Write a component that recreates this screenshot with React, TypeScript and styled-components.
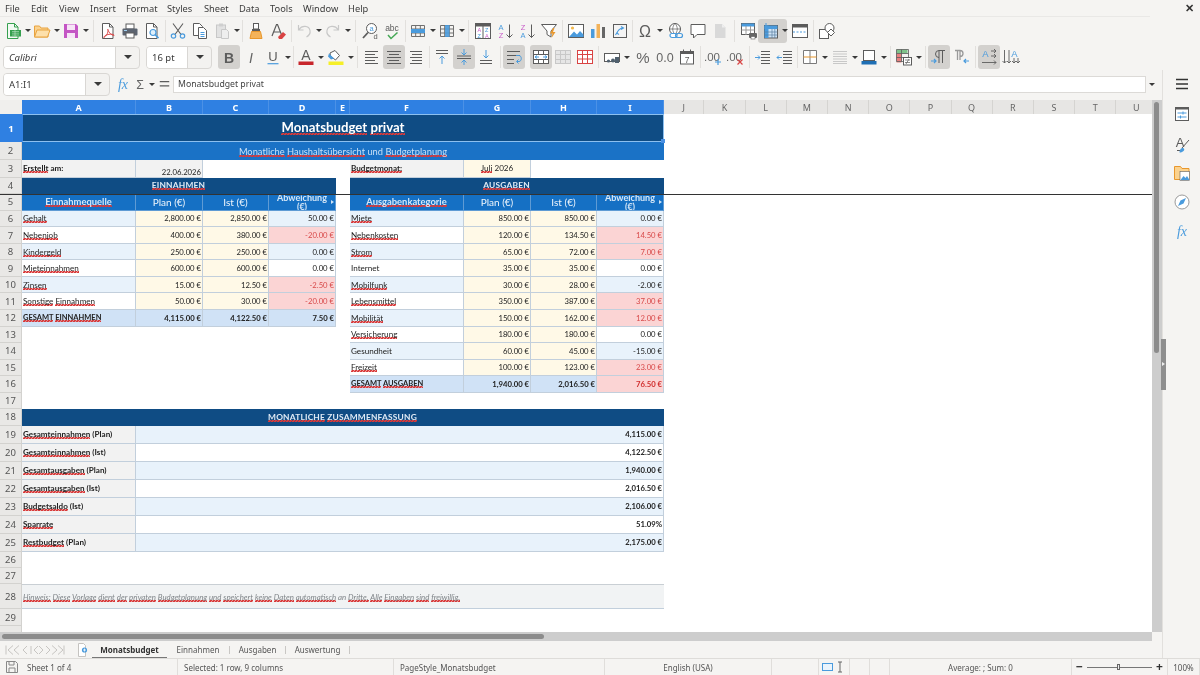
import React from 'react';
import styled, { createGlobalStyle, css } from 'styled-components';

const GlobalStyle = createGlobalStyle`
  html, body { margin: 0; padding: 0; background: #f5f4f2; }
  #root { width: 1200px; height: 675px; overflow: hidden; }
`;

const UI = `"Noto Sans", "Open Sans", sans-serif`;
const CELL = `Lato, "Open Sans", sans-serif`;
const DK = '#5c5c5c', BL = '#4a9bdd', GR = '#9a9a9a', LG = '#c8c8c8', OR = '#e8972c', RD = '#d94343';

const L = ({ ys, x1 = 3, x2 = 15, c = DK }: { ys: number[]; x1?: number; x2?: number; c?: string }) => (
  <path d={ys.map((y) => `M${x1} ${y}H${x2}`).join('')} stroke={c} strokeWidth="1" fill="none" />
);
const Grid = ({ c = '#707070', x = 2, y = 3, w = 14, h = 12 }: { c?: string; x?: number; y?: number; w?: number; h?: number }) => (
  <path
    d={`M${x + 0.5} ${y + 0.5}h${w - 1}v${h - 1}h-${w - 1}zM${x + 0.5} ${y + h / 3}h${w - 1}M${x + 0.5} ${y + (2 * h) / 3}h${w - 1}M${x + w / 3} ${y + 0.5}v${h - 1}M${x + (2 * w) / 3} ${y + 0.5}v${h - 1}`}
    stroke={c}
    fill="none"
  />
);
const Tx = ({ x, y, s, c = DK, t, b, i }: { x: number; y: number; s: number; c?: string; t: string; b?: boolean; i?: boolean }) => (
  <text x={x} y={y} fontSize={s} fill={c} fontFamily="Liberation Sans, sans-serif" fontWeight={b ? 700 : 400} fontStyle={i ? 'italic' : 'normal'} textAnchor="middle">{t}</text>
);

const icons: Record<string, React.ReactNode> = {
  new: <><path d="M3.500 1.500h7l3.500 3.500v11.500H3.500z" fill="#f2faf3" stroke="#36a04f" /><path d="M10.500 1.500v3.500H14" fill="none" stroke="#36a04f" /><rect x="6" y="8" width="11" height="6.500" fill="#36a04f" /><path d="M8 9.500h7M8 11.200h7M8 13h7M11 8v6.500" stroke="#bfe5c7" strokeWidth=".6" /></>,
  open: <><path d="M1.500 4h5l1.500 2h7v9h-13.500z" fill="#fbd28e" stroke="#e8a33f" /><path d="M1.500 15l2.500-7h13l-2.500 7z" fill="#fde0ab" stroke="#e8a33f" /></>,
  save: <><path d="M2 2h12l2 2v12H2z" fill="#c455c4" /><rect x="5" y="2.500" width="8" height="5.500" fill="#f6e4f6" /><rect x="5" y="11" width="8" height="5" fill="#f6e4f6" /></>,
  pdf: <><path d="M3.500 1.500h7l3.500 3.500v11.500H3.500z" fill="#fff" stroke={DK} /><path d="M10.500 1.500v3.500H14" fill="none" stroke={DK} /><path d="M9 9c0 3-3 6-4 6.500s.5-2.500 4-3 5-.5 6 .5-3 .5-5-3-1-3.500-1-1.500z" fill="none" stroke={RD} strokeWidth=".9" /></>,
  print: <><rect x="5" y="2" width="8" height="5" fill="#fff" stroke={DK} /><rect x="1.500" y="6.500" width="15" height="7" rx="1" fill="#5c6470" /><rect x="5" y="11" width="8" height="5" fill="#fff" stroke={DK} /><path d="M3 8.500h3" stroke="#9fd0f0" /></>,
  preview: <><path d="M3.500 1.500h7l3.500 3.500v11.500H3.500z" fill="#fff" stroke={DK} /><path d="M10.500 1.500v3.500H14" fill="none" stroke={DK} /><circle cx="10" cy="10.500" r="3" fill="#dff0fb" stroke={BL} strokeWidth="1.200" /><path d="M12.200 12.800l3.300 3.300" stroke={BL} strokeWidth="1.600" /></>,
  cut: <><path d="M4 1.500l8 11M14 1.500l-8 11" stroke={DK} fill="none" strokeWidth="1.100" /><circle cx="4.500" cy="14" r="2.200" fill="none" stroke={BL} strokeWidth="1.200" /><circle cx="13.500" cy="14" r="2.200" fill="none" stroke={BL} strokeWidth="1.200" /></>,
  copy: <><path d="M2.500 1.500h6l3 3v9h-9z" fill="#fff" stroke={DK} /><path d="M7.500 5.500h5l3 3v8h-8z" fill="#fff" stroke={DK} /><path d="M9.500 10.500h4M9.500 12.500h4M9.500 14.500h4" stroke={BL} /></>,
  paste: <><rect x="3.500" y="3" width="9" height="12.500" fill="#e2e2e2" stroke={LG} /><rect x="6" y="1.500" width="4" height="3" fill="#cfcfcf" /><path d="M8.500 7.500h5l2 2v7h-7z" fill="#eee" stroke={LG} /></>,
  clone: <><rect x="6.500" y="1.500" width="5" height="5.500" fill="#fff" stroke={DK} /><rect x="5" y="7" width="8" height="2.500" fill={DK} /><path d="M4.500 9.500h9l1.500 7H3z" fill="#f4b35a" stroke={OR} /></>,
  clear: <><path d="M3 14L7.500 2.500h1L13 14M5 10h6.500" fill="none" stroke={DK} strokeWidth="1.200" /><path d="M9 15l5-5 3 2.500-4 4.500h-3z" fill={RD} /></>,
  undo: <path d="M4 7.500c3-4.500 10-4 11 1 .6 3-1 5-3.500 6.500M3.500 3v5h5" fill="none" stroke={LG} strokeWidth="1.200" />,
  redo: <path d="M14 7.500c-3-4.500-10-4-11 1-.6 3 1 5 3.500 6.500M14.500 3v5h-5" fill="none" stroke={LG} strokeWidth="1.200" />,
  find: <><circle cx="10.500" cy="6.500" r="5" fill="#fff" stroke={DK} /><path d="M7 10.500l-5 5.500" stroke={DK} strokeWidth="1.800" /><Tx x={10.500} y={9} s={7.500} c={BL} t="a" /><Tx x={14.500} y={17} s={7.500} t="d" /></>,
  spell: <><Tx x={9} y={9} s={8.500} t="abc" /><path d="M5 13l3 3.500 6.500-6" fill="none" stroke="#45a855" strokeWidth="1.500" /></>,
  row: <><Grid /><rect x="2" y="7" width="14" height="4" fill={BL} /></>,
  col: <><Grid /><rect x="7" y="3" width="4.500" height="12" fill={BL} opacity=".9" /></>,
  sort: <><rect x="1.500" y="1.500" width="15" height="15" fill="#fff" stroke={DK} /><rect x="1.500" y="1.500" width="15" height="3" fill={DK} /><path d="M9 4v12" stroke={DK} /><Tx x={5.300} y={10} s={5.500} c="#c85ac8" t="A" /><Tx x={5.300} y={15.500} s={5.500} c={BL} t="Z" /><Tx x={12.800} y={10} s={5.500} c={BL} t="Z" /><Tx x={12.800} y={15.500} s={5.500} c="#c85ac8" t="A" /></>,
  asc: <><Tx x={5} y={8} s={7.500} c={BL} t="A" /><Tx x={5} y={16} s={7.500} c="#c85ac8" t="Z" /><path d="M13.500 2.500v13M10.500 12.500l3 3 3-3" fill="none" stroke={DK} /></>,
  desc: <><Tx x={5} y={8} s={7.500} c="#c85ac8" t="Z" /><Tx x={5} y={16} s={7.500} c={BL} t="A" /><path d="M13.500 2.500v13M10.500 12.500l3 3 3-3" fill="none" stroke={DK} /></>,
  filter: <><path d="M1.500 2.500h15l-5.500 6.500v6l-4-2.500V9z" fill="#fff" stroke={DK} /><path d="M13 6l-3 5.500h2.500l-1 4.500 4-6h-2.500l1.500-4z" fill={OR} /></>,
  image: <><rect x="1.500" y="2.500" width="15" height="13" fill="#fff" stroke={DK} /><circle cx="5.500" cy="6" r="1.600" fill="#f2b84c" /><path d="M2 15l5-5.500 3 3 3-3.500 3.500 3.500V15z" fill={BL} /></>,
  chart: <><rect x="2" y="7" width="3.500" height="9" fill={BL} /><rect x="7.500" y="2" width="3.500" height="14" fill="#f2b25a" /><rect x="13" y="5" width="3" height="11" fill="#666" /></>,
  pivot: <><rect x="2.500" y="2.500" width="13" height="13" fill="#f4f4f4" stroke={DK} /><path d="M6 12c0-3 3-6 6-6M10 4.500L12.500 6 10 7.500M8 12.500L5.700 11 4.500 13" fill="none" stroke={BL} strokeWidth="1.100" /></>,
  omega: <Tx x={9} y={15} s={16} t="Ω" />,
  link: <><circle cx="8" cy="7" r="5.500" fill="#fff" stroke={DK} /><path d="M2.500 7h11M8 1.500c-3 3-3 8 0 11M8 1.500c3 3 3 8 0 11" fill="none" stroke={DK} strokeWidth=".7" /><rect x="3" y="11.500" width="7" height="4" rx="2" fill="#fff" stroke={BL} strokeWidth="1.200" /><rect x="8.500" y="11.500" width="7" height="4" rx="2" fill="none" stroke={BL} strokeWidth="1.200" /></>,
  comment: <path d="M2 2.500h14v10H8l-3.500 3.500v-3.500H2z" fill="#fff" stroke={DK} />,
  note: <><path d="M4 2h7l3.500 3.500V16H4z" fill="#d9d9d9" /><path d="M11 2v3.500h3.500" fill="#eee" /></>,
  area: <><rect x="1.500" y="1.500" width="13" height="11" fill="#fff" stroke={DK} /><rect x="1.500" y="1.500" width="13" height="3" fill={BL} /><path d="M1.500 8h13M6 4v9M10.500 4v9" stroke={GR} /><rect x="9" y="11" width="8" height="5" rx="1" fill="#666" /><rect x="11" y="14.500" width="4" height="2.500" fill="#fff" stroke={DK} strokeWidth=".6" /></>,
  freeze: <><rect x="2.500" y="3.500" width="13" height="12.500" fill="#cfe4f6" stroke={DK} /><rect x="2.500" y="3.500" width="13" height="3.500" fill={BL} /><rect x="2.500" y="3.500" width="4" height="12.500" fill={BL} /><path d="M2.500 10h13M2.500 13h13M10 7v9M12.800 7v9" stroke="#5a7fa0" strokeWidth=".7" /><path d="M4 1v3" stroke={BL} /></>,
  split: <><rect x="1.500" y="2.500" width="15" height="13" fill="#fff" stroke={DK} /><rect x="1.500" y="2.500" width="15" height="3" fill={DK} /><path d="M2 10h14" stroke={BL} strokeDasharray="2 1.500" /></>,
  shapes: <><rect x="1.500" y="7.500" width="9" height="9" fill="#fff" stroke={DK} /><circle cx="11.500" cy="6" r="4.500" fill="#fff" stroke={DK} /><path d="M13 7l3.500 3.500-3.500 3.500-3.500-3.500z" fill="#fff" stroke={DK} /></>,
  bold: <Tx x={9} y={14.500} s={14} t="B" b />,
  italic: <Tx x={9} y={14.500} s={14} t="I" i c="#666" />,
  under: <><Tx x={9} y={13} s={13} t="U" /><path d="M3.500 15.700h11" stroke={BL} strokeWidth="1.200" /></>,
  fcolor: <><Tx x={9} y={12} s={14} t="A" /><rect x="1.500" y="13.500" width="15" height="3.500" fill="#c8262c" /></>,
  bcolor: <><path d="M3 5l5-2.500 4.500 5-4 4.500-5-4z" fill="#fff" stroke={DK} /><path d="M2 5.500l5 5-3 1-3-3z" fill={BL} /><rect x="1.500" y="13.500" width="15" height="3.500" fill="#f6ef28" /></>,
  aleft: <><L ys={[3.500, 9.500, 15.500]} x1={2} x2={15} /><L ys={[6.500, 12.500]} x1={2} x2={12} /></>,
  acenter: <><L ys={[3.500, 9.500, 15.500]} x1={2} x2={16} /><L ys={[6.500, 12.500]} x1={4} x2={14} /></>,
  aright: <><L ys={[3.500, 9.500, 15.500]} x1={3} x2={15} /><L ys={[6.500, 12.500]} x1={5} x2={15} /></>,
  vtop: <><L ys={[2.500, 5.500]} x1={3} x2={15} /><path d="M9 16V8M6.500 10.500L9 8l2.500 2.500" fill="none" stroke={BL} /></>,
  vmid: <><L ys={[8, 10.500]} x1={2} x2={16} /><path d="M9 1v6M6.500 4.500L9 7l2.500-2.500M9 17v-5M6.500 14.500L9 12l2.500 2.500" fill="none" stroke={BL} /></>,
  vbot: <><L ys={[12.500, 15.500]} x1={3} x2={15} /><path d="M9 2v8M6.500 7.500L9 10l2.500-2.500" fill="none" stroke={BL} /></>,
  wrap: <><L ys={[3.500, 7.500]} x1={2} x2={15} /><L ys={[11.500, 15.500]} x1={2} x2={9} /><path d="M11 7.500h3c3 0 3 6 0 6h-2M13.500 11.500l-2 2 2 2" fill="none" stroke={BL} /></>,
  merge: <><rect x="1.500" y="2.500" width="15" height="13" fill="#fff" stroke={DK} /><path d="M1.500 6.500h15M1.500 11.500h15M6.500 2.500v4M11.500 2.500v4M6.500 11.500v4M11.500 11.500v4" stroke={DK} /><path d="M3 9h4M5 7.500L3 9l2 1.500M15 9h-4M13 7.500L15 9l-2 1.500" fill="none" stroke={BL} /></>,
  across: <><rect x="1.500" y="2.500" width="15" height="13" fill="#e6e6e6" stroke={LG} /><path d="M1.500 6.500h15M1.500 11.500h15M6.500 2.500v13M11.500 2.500v13" stroke={LG} /></>,
  unmerge: <><rect x="1.500" y="2.500" width="15" height="13" fill="#fff" stroke={RD} /><path d="M1.500 6.500h15M1.500 11h15M6.500 2.500v13M11.500 2.500v13" stroke={RD} /></>,
  money: <><rect x="1.500" y="5.500" width="15" height="8" fill="#fff" stroke={DK} /><circle cx="10" cy="12.500" r="2" fill="#50606e" /><rect x="12" y="9" width="4" height="6" fill="#50606e" /><circle cx="5.500" cy="13" r="1.600" fill="#50606e" /></>,
  percent: <Tx x={9} y={15} s={15} t="%" c="#666" />,
  number: <Tx x={9} y={14} s={12.500} t="0.0" c="#666" />,
  date: <><rect x="2.500" y="3.500" width="13" height="12.500" fill="#fff" stroke={DK} /><rect x="2.500" y="3.500" width="13" height="2.500" fill={DK} /><path d="M5.500 1.500v3M12.500 1.500v3" stroke={DK} /><Tx x={9} y={14.500} s={8.500} t="7" /></>,
  addd: <><Tx x={8} y={13} s={11.500} t=".00" c="#666" /><path d="M14 11v6M11 14h6" stroke={BL} strokeWidth="1.200" /></>,
  deld: <><Tx x={8} y={13} s={11.500} t=".00" c="#666" /><path d="M11.500 11.500l5 5M16.500 11.500l-5 5" stroke={RD} strokeWidth="1.200" /></>,
  inc: <><L ys={[3.500, 6.500, 9.500, 12.500, 15.500]} x1={7} x2={16} /><path d="M1 9.500h5M4 7.500l2 2-2 2" fill="none" stroke={BL} /></>,
  dec: <><L ys={[3.500, 6.500, 9.500, 12.500, 15.500]} x1={7} x2={16} /><path d="M6 9.500H1M3 7.500l-2 2 2 2" fill="none" stroke={BL} /></>,
  border: <><path d="M2.500 2.500h13v13h-13z" fill="#fff" stroke="#7a7a7a" /><path d="M9 2.500v13" stroke="#7a7a7a" /><path d="M2.500 9h13" stroke={OR} /></>,
  bstyle: <L ys={[3.500, 6, 8.500, 11, 13.500, 15.500]} x1={2} x2={16} c={LG} />,
  bcol: <><rect x="3.500" y="2.500" width="11" height="10" fill="#fff" stroke={DK} /><rect x="1.500" y="13" width="15" height="3.500" fill="#1f6fb4" /></>,
  cond: <><rect x="1.500" y="1.500" width="11" height="4" fill="#7fc28a" /><rect x="1.500" y="5.500" width="5" height="9" fill="#e88080" /><path d="M1.500 1.500h12v12h-12zM1.500 5.500h12M1.500 9.500h12M6.500 1.500v12" fill="none" stroke={DK} strokeWidth=".8" /><rect x="8.500" y="9.500" width="8" height="7.500" fill="#fff" stroke={DK} /><path d="M10 12h5M10 14.500h5M14 11l-3 5" stroke={DK} strokeWidth=".7" /></>,
  ltr: <><path d="M9 15V2.500h6M12.500 2.500V15M9 2.500a3.500 3.500 0 000 7" fill="none" stroke={DK} /><path d="M1 13h5M4 11l2 2-2 2" fill="none" stroke={BL} strokeWidth="1.200" /></>,
  rtl: <><path d="M7 12V2.500H2M4.500 2.500V12M7 2.500a3 3 0 010 6" fill="none" stroke={GR} strokeWidth="1.300" /><path d="M16 13h-5M13 11l-2 2 2 2" fill="none" stroke={BL} strokeWidth="1.200" /></>,
  textl: <><Tx x={5.500} y={9} s={9.500} c={BL} t="A" /><path d="M11 3h5M14 1l2 2-2 2M11 8h5M14 6l2 2-2 2M2 14.500h14M14 12.500l2 2-2 2" fill="none" stroke={DK} strokeWidth=".9" /></>,
  textv: <><Tx x={12.500} y={9} s={9.500} c={BL} t="A" /><path d="M2.500 2v13M.5 13l2 2 2-2M7 2v13M5 13l2 2 2-2M12 10v5M10 13l2 2 2-2M16 10v5M14 13l2 2 2-2" fill="none" stroke={DK} strokeWidth=".9" /></>,
  fx: <text x="9" y="14" fontSize="14" fontStyle="italic" fill={BL} fontFamily="Liberation Serif, serif" textAnchor="middle">fx</text>,
  sum: <Tx x={9} y={15} s={16} t="Σ" c="#666" />,
  equals: <path d="M4 6.500h10M4 11h10" stroke={DK} strokeWidth="1.500" />,
  side: <path d="M3 4.500h12M3 9h12M3 13.500h12" stroke="#333" strokeWidth="1.600" />,
  props: <><rect x="2.500" y="2.500" width="13" height="13" fill="#fff" stroke={DK} /><rect x="2.500" y="2.500" width="13" height="2" fill={DK} /><path d="M4.500 8h9M4.500 12h9M10 6.500v3M7.500 10.500v3" stroke={BL} /></>,
  styles: <><Tx x={7} y={11} s={13} t="A" /><path d="M4 14.500h6" stroke={DK} /><path d="M16 4L9 12" stroke={DK} /><path d="M6.500 16.500c0-3 1.500-4.500 3-4.500s2.500 1.500 1 3-2.500 1.500-4 1.500z" fill={BL} /></>,
  gallery: <><path d="M1.500 2.500h6l1.500 2h7v11h-14.500z" fill="#fbd28e" stroke={OR} /><rect x="7" y="7.500" width="9.500" height="9" fill="#fff" stroke={DK} strokeWidth=".6" /><path d="M7.500 16l3-4 2 2 1.500-2 2.500 4z" fill={BL} /></>,
  nav: <><circle cx="9" cy="9" r="7" fill="#fff" stroke={GR} /><path d="M13 5l-2.500 5.500L5 13l2.500-5.500z" fill={BL} /></>,
};

const Ic = ({ n }: { n: string }) => (
  <svg width={18} height={18} viewBox="0 0 18 18" aria-hidden="true">{icons[n]}</svg>
);

const Frame = styled.div`
  width: 1200px; height: 675px; display: flex; flex-direction: column; overflow: hidden;
  background: #f5f4f2; font-family: ${UI}; color: #444; filter: blur(0.35px);
`;
const MenuBar = styled.div`
  height: 17px; display: flex; align-items: center; position: relative;
  font-size: 9.300px; color: #3c3c3c; border-bottom: 1px solid #e9e8e6; box-sizing: border-box; margin-right: 50px;
`;
const MenuItem = styled.span<{ $w: number }>`width: ${(p) => p.$w}px; padding-left: 5px; box-sizing: border-box; flex: none;`;
const CloseX = styled.span`position: absolute; right: -44px; top: 2px; font-size: 11px; color: #333; font-weight: 700; line-height: 12px;`;

const Toolbar = styled.div<{ $h: number }>`height: ${(p) => p.$h}px; display: flex; align-items: center; padding-left: 2px; flex: none;`;
const Tool = styled.span<{ $on?: boolean }>`
  width: 22px; height: 24px; display: flex; align-items: center; justify-content: center; flex: none; border-radius: 3px;
  ${(p) => p.$on && css`background: #d3d1ce;`}
`;
const CaretBox = styled.span<{ $w?: number }>`
  width: ${(p) => p.$w ?? 7}px; height: 24px; flex: none; display: flex; align-items: center; justify-content: center;
  &::after { content: ''; border: 3px solid transparent; border-top: 3.500px solid #3a3a3a; border-bottom: 0; }
`;
const ToolGroup = styled.span`
  display: flex; align-items: center; background: #d3d1ce; border-radius: 3px; margin: 0 2px 0 -2px; padding-left: 2px; height: 24px;
`;
const Sep = styled.span<{ $w: number; $line: boolean }>`
  width: ${(p) => p.$w}px; height: 22px; flex: none; display: flex; justify-content: center;
  ${(p) => p.$line && css`&::before { content: ''; width: 1px; background: #e2e0dd; }`}
`;
const Combo = styled.div<{ $w: number; $ml?: number }>`
  width: ${(p) => p.$w}px; height: 23px; margin-left: ${(p) => p.$ml ?? 0}px; flex: none; display: flex; box-sizing: border-box;
  border: 1px solid #d9d7d4; border-radius: 4px; background: #f3f2f0; font-size: 9.500px; color: #3a3a3a;
`;
const ComboText = styled.span<{ $italic?: boolean }>`
  flex: 1; display: flex; align-items: center; padding-left: 5px; background: #fff; border-right: 1px solid #d9d7d4; border-radius: 3px 0 0 3px;
  font-style: ${(p) => (p.$italic ? 'italic' : 'normal')};
`;
const ComboBtn = styled(CaretBox)`
  height: auto; align-self: stretch;
  &::after { border-width: 4px; border-top-width: 4.500px; border-bottom: 0; }
`;

const Body = styled.div`flex: 1; display: flex; min-height: 0;`;
const Main = styled.div`width: 1162px; display: flex; flex-direction: column;`;
const FormulaBar = styled.div`height: 30px; display: flex; align-items: center; padding-left: 3px; flex: none; box-sizing: border-box; padding-bottom: 2px;`;
const FxTool = styled.span<{ $w: number }>`width: ${(p) => p.$w}px; display: flex; justify-content: center; flex: none;`;
const FormulaInput = styled.div`
  width: 973px; height: 17px; box-sizing: border-box; border: 1px solid #dcdad7; background: #fff; display: flex; align-items: center;
  padding-left: 4px; font-size: 8.700px; color: #444; flex: none;
`;

const SheetRow = styled.div`height: 532px; display: flex; flex: none;`;
const Sheet = styled.div`
  width: 1152px; height: 532px; overflow: hidden; position: relative; background: #fff; display: grid; flex: none;
  grid-template-columns: 22px 114px 67px 66px 67px 14px 114px 67px 66px 67px 40.400px repeat(11, 41.200px);
  grid-template-rows: 14px 28px 18px 17.500px 16.500px 16.700px repeat(12, 16.550px) 16.400px repeat(7, 18px) 16.300px 16.300px 25px 17.200px 18px;
  font-family: ${CELL}; font-size: 8.100px; color: #222;
`;
const Corner = styled.div`background: #f0efed;`;
const ColHead = styled.div<{ $on?: boolean }>`
  display: flex; align-items: center; justify-content: center; box-sizing: border-box; font-family: ${UI}; font-size: 9px;
  ${(p) => (p.$on
    ? css`background: #2f80e2; color: #fff; font-weight: 700; border-right: 1px solid #4b91e6;`
    : css`background: #e7e6e4; color: #666; border-right: 1px solid #d5d4d1;`)}
`;
const RowHead = styled.div<{ $on?: boolean }>`
  display: flex; align-items: center; justify-content: center; box-sizing: border-box; font-family: ${UI}; font-size: 9.500px;
  ${(p) => (p.$on
    ? css`background: #2f80e2; color: #fff; font-weight: 700;`
    : css`background: #e9e8e6; color: #555; border-bottom: 1px solid #d3d2cf; border-right: 1px solid #d3d2cf;`)}
`;
const Blank = styled.div<{ $span?: number }>`grid-column: span ${(p) => p.$span ?? 1};`;
const Cell = styled.div<{ $bg?: string; $c?: string; $b?: boolean; $right?: boolean; $span?: number }>`
  grid-column: span ${(p) => p.$span ?? 1}; box-sizing: border-box; display: flex; align-items: center; overflow: hidden; white-space: nowrap;
  padding: 0 1px; border-right: 1px solid #c2cfdc; border-bottom: 1px solid #c2cfdc;
  background: ${(p) => p.$bg ?? '#fff'}; color: ${(p) => p.$c ?? '#222'}; font-weight: ${(p) => (p.$b ? 700 : 400)};
  justify-content: ${(p) => (p.$right ? 'flex-end' : 'flex-start')};
  font-size: ${(p) => (p.$right ? '7.700px' : '8.100px')};
`;
const TitleCell = styled(Cell)`
  justify-content: center; background: #0f4c84; color: #fff; font-weight: 700; font-size: 13.200px; position: relative; overflow: visible;
  padding-bottom: 2px;
  border: 1px solid #8cc0f0; border-left-color: #2f80e2;
  &::after { content: ''; position: absolute; right: -2px; bottom: -2px; width: 4px; height: 4px; background: #4a90e2; z-index: 2; }
`;
const SubCell = styled(Cell)`justify-content: center; background: #1a72c6; color: #c9e0f6; font-size: 9.300px; border: 0;`;
const SectionCell = styled(Cell)`justify-content: center; background: #0f4c84; color: #dfeaf5; font-weight: 700; font-size: 8.400px; letter-spacing: .2px; border-color: #0f4c84;`;
const TableHead = styled(Cell)`justify-content: center; background: #1570c4; color: #d6e7f7; font-weight: 700; font-size: 9.400px; border-color: #5f9bd4;`;
const PlanHead = styled(TableHead)`font-size: 10px; font-weight: 400; color: #eef5fc;`;
const DevHead = styled(TableHead)`
  white-space: normal; text-align: center; line-height: 9px; font-size: 9px; position: relative;
  &::after { content: ''; position: absolute; right: 1px; top: 6px; border-left: 3px solid #cfe2f5; border-top: 2.500px solid transparent; border-bottom: 2.500px solid transparent; }
`;
const DateCell = styled(Cell)`align-items: flex-end;`;
const MonthCell = styled(Cell)`justify-content: center;`;
const NoteCell = styled(Cell)`background: #f1f3f4; color: #7f8488; font-size: 7.850px; font-style: italic; border-top: 1px solid #c9cfd4; border-right: 0;`;
const TotalLabel = styled(Cell)`font-size: 7.500px;`;
const Squiggle = styled.span`
  background-image:
    linear-gradient(135deg, transparent 35%, #d83a3a 35% 65%, transparent 65%),
    linear-gradient(45deg, transparent 35%, #d83a3a 35% 65%, transparent 65%);
  background-size: 3px 2px;
  background-position: 0 100%, 1.500px 100%;
  background-repeat: repeat-x;
`;
const FreezeLine = styled.div`position: absolute; left: 0; right: 0; top: 94px; height: 1px; background: #333; z-index: 3;`;

const VScroll = styled.div`width: 10px; background: #cdcdcd; position: relative; flex: none;`;
const VThumb = styled.div`position: absolute; left: 2px; top: 2px; width: 5px; height: 251px; background: #8c8c8c; border-radius: 3px;`;
const HScroll = styled.div`width: 1152px; height: 9px; background: #cdcdcd; position: relative; flex: none;`;
const HThumb = styled.div`position: absolute; left: 2px; top: 2px; width: 542px; height: 5px; background: #8c8c8c; border-radius: 3px;`;

const TabBar = styled.div`height: 17px; display: flex; align-items: center; font-size: 8px; color: #555; flex: none; position: relative;`;
const NavArrows = styled.svg`margin-left: 5px; flex: none;`;
const NewSheet = styled.span`margin-left: 9px; width: 18px; display: flex; flex: none;`;
const Tab = styled.span<{ $w: number; $on?: boolean }>`
  width: ${(p) => p.$w}px; height: 17px; box-sizing: border-box; display: flex; align-items: center; justify-content: center; flex: none;
  ${(p) => p.$on && css`font-weight: 700; color: #333; border-bottom: 1.500px solid #777;`}
`;
const TabDiv = styled.span`width: 1px; height: 8px; background: #c9c7c4; flex: none;`;

const Sidebar = styled.div`
  width: 38px; box-sizing: border-box; border-left: 1px solid #e2e0dd; position: relative; display: flex; flex-direction: column; align-items: center; padding-top: 5px;
`;
const SideTool = styled.span<{ $mb: number }>`display: flex; margin-bottom: ${(p) => p.$mb}px;`;
const Handle = styled.div`
  position: absolute; left: -2px; top: 269px; width: 5px; height: 51px; background: #8e8e8e;
  &::after { content: ''; position: absolute; left: 1px; top: 23px; border-left: 3px solid #eee; border-top: 2.500px solid transparent; border-bottom: 2.500px solid transparent; }
`;

const StatusBar = styled.div`height: 17px; flex: none; display: flex; align-items: center; box-sizing: border-box; border-top: 1px solid #dedcd9; font-size: 8px; color: #555;`;
const StatusCell = styled.span<{ $w: number; $center?: boolean }>`
  width: ${(p) => p.$w}px; height: 100%; box-sizing: border-box; border-right: 1px solid #e0dedb; display: flex; align-items: center; flex: none;
  ${(p) => (p.$center ? css`justify-content: center;` : css`padding-left: 6px;`)}
`;
const SheetCount = styled.span`margin-left: 9px;`;
const ZoomSlider = styled.span`position: relative; width: 65px; height: 1px; background: #777; margin: 0 4px; flex: none;
  &::after { content: ''; position: absolute; left: 30px; top: -3px; width: 3px; height: 6px; border: 1px solid #666; background: #eee; box-sizing: border-box; }
`;
const ZoomBtn = styled.span`font-size: 12px; color: #333; font-weight: 700; line-height: 12px;`;

const menu: [string, number][] = [['File', 26], ['Edit', 28], ['View', 31], ['Insert', 36], ['Format', 41], ['Styles', 37], ['Sheet', 35], ['Data', 31], ['Tools', 33], ['Window', 45], ['Help', 40]];

const row1 = 'new+ open+ save+ |8 pdf print preview |4 cut copy paste+ |5 clone clear |4 undo+ redo+ |8 find spell |4 row+ col+ |7 sort asc desc filter |5 image chart pivot |3 omega+ _2 link comment note |7 area freeze@ split |5 shapes';
const row2 = 'bold* italic under+ |4 fcolor+ _1 bcolor+ |7 aleft acenter* aright |4 vtop vmid* vbot |6 wrap* _5 merge* across unmerge |5 money+ _2 percent number date |4 addd deld |6 inc dec |3 border+ _1 bstyle+ bcol+ |6 cond+ |6 ltr* _1 rtl |5 textl* textv';

const ToolStrip = ({ spec }: { spec: string }) => (
  <>
    {spec.split(' ').map((tok, k) => {
      if (tok[0] === '|') return <Sep key={k} $w={+tok.slice(1)} $line />;
      if (tok[0] === '_') return <Sep key={k} $w={+tok.slice(1)} $line={false} />;
      const n = tok.replace(/[+*@]/g, '');
      if (tok.endsWith('@')) return <ToolGroup key={k}><Tool><Ic n={n} /></Tool><CaretBox $w={5} /></ToolGroup>;
      return (
        <React.Fragment key={k}>
          <Tool $on={tok.endsWith('*')}><Ic n={n} /></Tool>
          {tok.endsWith('+') && <CaretBox />}
        </React.Fragment>
      );
    })}
  </>
);

const T = ({ s }: { s: string }) => (
  <span>
    {s.split(' ').map((w, i) => (
      <React.Fragment key={i}>
        {i > 0 && ' '}
        {w[0] === '~' ? <Squiggle>{w.slice(1)}</Squiggle> : w}
      </React.Fragment>
    ))}
  </span>
);

const LB = '#e8f2fb', CR = '#fff9e7', RB = '#fbd4d4', TB = '#d0e2f6';
const rest = <Blank $span={12} />;

type Line = [string, string, string, string, 'r' | 'b' | 'w'];
const income: Line[] = [
  ['~Gehalt', '2,800.00 €', '2,850.00 €', '50.00 €', 'b'],
  ['~Nebenjob', '400.00 €', '380.00 €', '-20.00 €', 'r'],
  ['~Kindergeld', '250.00 €', '250.00 €', '0.00 €', 'b'],
  ['~Mieteinnahmen', '600.00 €', '600.00 €', '0.00 €', 'w'],
  ['~Zinsen', '15.00 €', '12.50 €', '-2.50 €', 'r'],
  ['~Sonstige ~Einnahmen', '50.00 €', '30.00 €', '-20.00 €', 'r'],
];
const costs: Line[] = [
  ['~Miete', '850.00 €', '850.00 €', '0.00 €', 'b'],
  ['~Nebenkosten', '120.00 €', '134.50 €', '14.50 €', 'r'],
  ['~Strom', '65.00 €', '72.00 €', '7.00 €', 'r'],
  ['Internet', '35.00 €', '35.00 €', '0.00 €', 'w'],
  ['~Mobilfunk', '30.00 €', '28.00 €', '-2.00 €', 'b'],
  ['~Lebensmittel', '350.00 €', '387.00 €', '37.00 €', 'r'],
  ['~Mobilität', '150.00 €', '162.00 €', '12.00 €', 'r'],
  ['~Versicherung', '180.00 €', '180.00 €', '0.00 €', 'w'],
  ['Gesundheit', '60.00 €', '45.00 €', '-15.00 €', 'b'],
  ['~Freizeit', '100.00 €', '123.00 €', '23.00 €', 'r'],
];
const summary: [string, string][] = [
  ['~Gesamteinnahmen (Plan)', '4,115.00 €'],
  ['~Gesamteinnahmen (Ist)', '4,122.50 €'],
  ['~Gesamtausgaben (Plan)', '1,940.00 €'],
  ['~Gesamtausgaben (Ist)', '2,016.50 €'],
  ['~Budgetsaldo (Ist)', '2,106.00 €'],
  ['~Sparrate', '51.09%'],
  ['~Restbudget (Plan)', '2,175.00 €'],
];

const LineCells = ({ l, i }: { l: Line; i: number }) => (
  <>
    <Cell $bg={i % 2 ? '#fff' : LB}><T s={l[0]} /></Cell>
    <Cell $bg={CR} $right>{l[1]}</Cell>
    <Cell $bg={CR} $right>{l[2]}</Cell>
    <Cell $right $bg={l[4] === 'r' ? RB : l[4] === 'b' ? LB : '#fff'} $c={l[4] === 'r' ? '#d84a4a' : undefined}>{l[3]}</Cell>
  </>
);
const TotalCells = ({ l, a, b, c, red }: { l: string; a: string; b: string; c: string; red?: boolean }) => (
  <>
    <TotalLabel $bg={TB} $b><T s={l} /></TotalLabel>
    <Cell $bg={TB} $b $right>{a}</Cell>
    <Cell $bg={TB} $b $right>{b}</Cell>
    <Cell $bg={red ? RB : TB} $b $right $c={red ? '#d02c2c' : undefined}>{c}</Cell>
  </>
);
const Heads = ({ first }: { first: string }) => (
  <>
    <TableHead><T s={first} /></TableHead>
    <PlanHead>Plan (€)</PlanHead>
    <PlanHead>Ist (€)</PlanHead>
    <DevHead>Abweichung<br />(€)</DevHead>
  </>
);

const columns = 'ABCDEFGHIJKLMNOPQRSTU'.split('');

const SheetGrid = () => {
  const rows: React.ReactNode[] = [];
  const add = (n: number, node: React.ReactNode, on?: boolean) =>
    rows.push(<React.Fragment key={n}><RowHead $on={on}>{n < 30 ? n : ''}</RowHead>{node}</React.Fragment>);

  add(1, <><TitleCell $span={9}><T s="~Monatsbudget ~privat" /></TitleCell>{rest}</>, true);
  add(2, <><SubCell $span={9}><T s="~Monatliche ~Haushaltsübersicht und ~Budgetplanung" /></SubCell>{rest}</>);
  add(3, <><Cell $bg="#f2f2f2" $b><T s="~Erstellt am:" /></Cell><DateCell $bg="#f2f2f2" $right>22.06.2026</DateCell><Blank $span={3} /><Cell $bg="#f2f2f2" $b><T s="~Budgetmonat:" /></Cell><MonthCell $bg={CR}><T s="~Juli 2026" /></MonthCell><Blank $span={2} />{rest}</>);
  add(4, <><SectionCell $span={4}><T s="~EINNAHMEN" /></SectionCell><Blank /><SectionCell $span={4}><T s="~AUSGABEN" /></SectionCell>{rest}</>);
  add(5, <><Heads first="~Einnahmequelle" /><Blank /><Heads first="~Ausgabenkategorie" />{rest}</>);
  for (let i = 0; i < 11; i++) {
    const left = i < 6
      ? <LineCells l={income[i]} i={i} />
      : i === 6
        ? <TotalCells l="~GESAMT ~EINNAHMEN" a="4,115.00 €" b="4,122.50 €" c="7.50 €" />
        : <Blank $span={4} />;
    const right = i < 10
      ? <LineCells l={costs[i]} i={i} />
      : <TotalCells l="~GESAMT ~AUSGABEN" a="1,940.00 €" b="2,016.50 €" c="76.50 €" red />;
    add(6 + i, <>{left}<Blank />{right}{rest}</>);
  }
  add(17, <Blank $span={21} />);
  add(18, <><SectionCell $span={9}><T s="~MONATLICHE ~ZUSAMMENFASSUNG" /></SectionCell>{rest}</>);
  summary.forEach(([l, v], i) =>
    add(19 + i, <><Cell $bg="#f2f2f2" $b><T s={l} /></Cell><Cell $span={8} $right $b $bg={i % 2 ? '#fff' : LB}>{v}</Cell>{rest}</>));
  add(26, <Blank $span={21} />);
  add(27, <Blank $span={21} />);
  add(28, <><NoteCell $span={9}><T s="~Hinweis: ~Diese ~Vorlage ~dient ~der ~privaten ~Budgetplanung ~und ~speichert ~keine ~Daten ~automatisch an ~Dritte. ~Alle ~Eingaben ~sind ~freiwillig." /></NoteCell>{rest}</>);
  add(29, <Blank $span={21} />);
  add(30, <Blank $span={21} />);

  return (
    <Sheet>
      <Corner />
      {columns.map((c, i) => <ColHead key={c} $on={i < 9}>{c}</ColHead>)}
      {rows}
      <FreezeLine />
    </Sheet>
  );
};

export default function App() {
  return (
    <>
      <GlobalStyle />
      <Frame>
        <MenuBar>
          {menu.map(([m, w]) => <MenuItem key={m} $w={w}>{m}</MenuItem>)}
          <CloseX>✕</CloseX>
        </MenuBar>
        <Toolbar $h={27}><ToolStrip spec={row1} /></Toolbar>
        <Toolbar $h={26}>
          <Sep $w={1} $line={false} />
          <Combo $w={137}><ComboText $italic>Calibri</ComboText><ComboBtn $w={23} /></Combo>
          <Combo $w={66} $ml={6}><ComboText>16 pt</ComboText><ComboBtn $w={23} /></Combo>
          <Sep $w={6} $line={false} />
          <ToolStrip spec={row2} />
        </Toolbar>
        <Body>
          <Main>
            <FormulaBar>
              <Combo $w={107}><ComboText>A1:I1</ComboText><ComboBtn $w={23} /></Combo>
              <Sep $w={3} $line={false} />
              <FxTool $w={20}><Ic n="fx" /></FxTool>
              <FxTool $w={14}><Ic n="sum" /></FxTool>
              <CaretBox $w={9} />
              <FxTool $w={17}><Ic n="equals" /></FxTool>
              <FormulaInput>Monatsbudget privat</FormulaInput>
              <CaretBox $w={12} />
            </FormulaBar>
            <SheetRow>
              <SheetGrid />
              <VScroll><VThumb /></VScroll>
            </SheetRow>
            <HScroll><HThumb /></HScroll>
            <TabBar>
              <NavArrows width="60" height="12" viewBox="0 0 60 12" aria-hidden="true">
                <path d="M1 1.500v9M8 1.500L3 6l5 4.500M14 1.500L9 6l5 4.500M22 2l-4 4 4 4M26 2v8M33 2l-4 4 4 4M34 2l4 4-4 4M41 2l4 4-4 4M47 1.500l5 4.500-5 4.500M53 1.500l5 4.500-5 4.500M59 1.500v9" fill="none" stroke="#c7c5c2" />
              </NavArrows>
              <NewSheet>
                <svg width="18" height="14" viewBox="0 0 18 14" aria-hidden="true"><path d="M4.500.500h5l2 2v11h-7z" fill="#fff" stroke="#c5c3c0" /><circle cx="10.500" cy="7" r="2.600" fill={BL} /><path d="M9 7h3M10.500 5.500v3" stroke="#fff" strokeWidth=".8" /></svg>
              </NewSheet>
              <Tab $w={75} $on>Monatsbudget</Tab>
              <Tab $w={62}>Einnahmen</Tab>
              <TabDiv />
              <Tab $w={55}>Ausgaben</Tab>
              <TabDiv />
              <Tab $w={63}>Auswertung</Tab>
              <TabDiv />
            </TabBar>
          </Main>
          <Sidebar>
            <SideTool $mb={12}><Ic n="side" /></SideTool>
            <SideTool $mb={13}><Ic n="props" /></SideTool>
            <SideTool $mb={10}><Ic n="styles" /></SideTool>
            <SideTool $mb={11}><Ic n="gallery" /></SideTool>
            <SideTool $mb={11}><Ic n="nav" /></SideTool>
            <SideTool $mb={0}><Ic n="fx" /></SideTool>
            <Handle />
          </Sidebar>
        </Body>
        <StatusBar>
          <StatusCell $w={178}>
            <svg width="12" height="12" viewBox="0 0 12 12" aria-hidden="true"><path d="M.5.500h9l2 2v9h-11zM3 .5v3.500h5V.5M3 11.500V7h6v4.500" fill="none" stroke="#888" /></svg>
            <SheetCount>Sheet 1 of 4</SheetCount>
          </StatusCell>
          <StatusCell $w={216}>Selected: 1 row, 9 columns</StatusCell>
          <StatusCell $w={211}>PageStyle_Monatsbudget</StatusCell>
          <StatusCell $w={167} $center>English (USA)</StatusCell>
          <StatusCell $w={47} />
          <StatusCell $w={31} $center>
            <svg width="24" height="12" viewBox="0 0 24 12" aria-hidden="true"><rect x=".5" y="2.500" width="10" height="7" fill="#eaf4fc" stroke={BL} /><path d="M16 1h4M18 1v10M16 11h4" fill="none" stroke="#666" /></svg>
          </StatusCell>
          <StatusCell $w={20} />
          <StatusCell $w={20} />
          <StatusCell $w={182} $center>Average: ; Sum: 0</StatusCell>
          <StatusCell $w={96} $center><ZoomBtn>−</ZoomBtn><ZoomSlider /><ZoomBtn>+</ZoomBtn></StatusCell>
          <StatusCell $w={32} $center>100%</StatusCell>
        </StatusBar>
      </Frame>
    </>
  );
}
